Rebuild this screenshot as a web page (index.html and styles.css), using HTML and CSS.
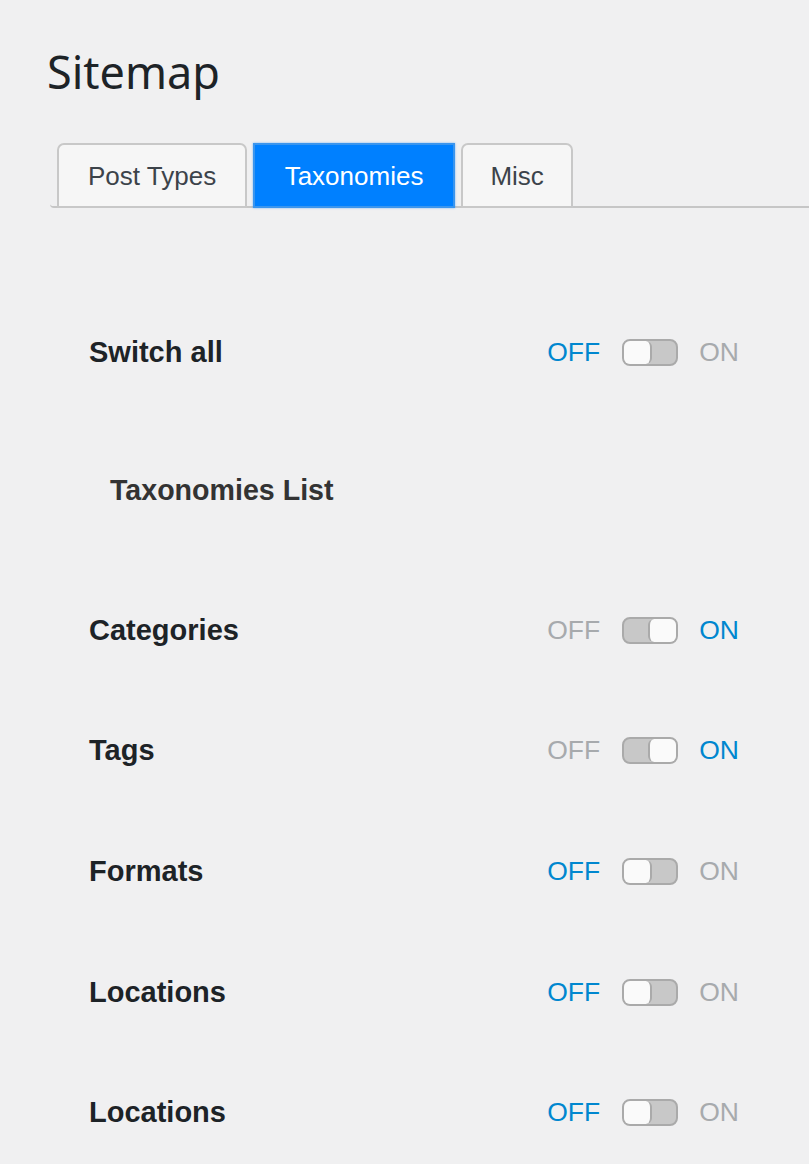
FILE: index.html
```html
<!DOCTYPE html>
<html>
<head>
<meta charset="utf-8">
<link rel="stylesheet" href="styles.css">
</head>
<body>
<div class="wrap">
  <h1 class="title">Sitemap</h1>
  <nav class="tabs">
    <a class="tab">Post Types</a>
    <a class="tab active">Taxonomies</a>
    <a class="tab last">Misc</a>
  </nav>
  <div class="content">
    <div class="row first">
      <span class="label">Switch all</span>
      <div class="switch"><span class="off">OFF</span><span class="toggle"><span class="knob"></span></span><span class="on">ON</span></div>
    </div>
    <div class="section"><h2 class="section-title">Taxonomies List</h2></div>
    <div class="row">
      <span class="label">Categories</span>
      <div class="switch checked"><span class="off">OFF</span><span class="toggle"><span class="knob"></span></span><span class="on">ON</span></div>
    </div>
    <div class="row">
      <span class="label">Tags</span>
      <div class="switch checked"><span class="off">OFF</span><span class="toggle"><span class="knob"></span></span><span class="on">ON</span></div>
    </div>
    <div class="row">
      <span class="label">Formats</span>
      <div class="switch"><span class="off">OFF</span><span class="toggle"><span class="knob"></span></span><span class="on">ON</span></div>
    </div>
    <div class="row">
      <span class="label">Locations</span>
      <div class="switch"><span class="off">OFF</span><span class="toggle"><span class="knob"></span></span><span class="on">ON</span></div>
    </div>
    <div class="row">
      <span class="label">Locations</span>
      <div class="switch"><span class="off">OFF</span><span class="toggle"><span class="knob"></span></span><span class="on">ON</span></div>
    </div>
  </div>
</div>
</body>
</html>
```
FILE: styles.css
```css
html, body {
  margin: 0;
  padding: 0;
  background: #f0f0f1;
  height: 1164px;
  overflow: hidden;
}
.wrap {
  padding-left: 50px;
  font-family: "Liberation Sans", Arial, sans-serif;
}
.title {
  margin: 0 0 0 -3px;
  padding-top: 41px;
  font-family: "Noto Sans", sans-serif;
  font-weight: 400;
  font-size: 45px;
  line-height: 62px;
  color: #1d2327;
}
.tabs {
  display: flex;
  gap: 6px;
  margin-top: 40px;
  padding-left: 7px;
  border-bottom: 2px solid #c6c6c6;
  border-bottom-left-radius: 4px;
}
.tab {
  display: block;
  box-sizing: border-box;
  height: 65px;
  margin-bottom: -2px;
  padding: 0 29px;
  border: 2px solid #c8c8c8;
  border-radius: 7px 7px 0 0;
  background: #f6f6f6;
  color: #3c434a;
  font-size: 26px;
  line-height: 62px;
}
.tab.last {
  padding: 0 27.5px;
}
.tab.active {
  background: #0080ff;
  border: 2px solid #3a95ee;
  border-radius: 0;
  color: #ffffff;
  padding: 0 29.5px;
  box-shadow: 0 0 2px rgba(0, 128, 255, 0.5);
}
.content {
  padding: 84px 70px 0 39px;
}
.row {
  display: flex;
  align-items: center;
  justify-content: space-between;
  height: 120.6px;
}
.row.first {
  height: 120px;
}
.label {
  font-weight: 700;
  font-size: 29px;
  color: #1d2327;
}
.section {
  height: 158px;
  display: flex;
  align-items: center;
}
.section-title {
  margin: 0 0 2px 21px;
  font-weight: 700;
  font-size: 28.6px;
  color: #333333;
}
.switch {
  display: flex;
  align-items: center;
  font-size: 26.5px;
  color: #a7aaad;
}
.switch .off {
  color: #0087cf;
}
.switch .on {
  color: #a7aaad;
}
.switch.checked .off {
  color: #a7aaad;
}
.switch.checked .on {
  color: #0087cf;
}
.toggle {
  display: flex;
  box-sizing: border-box;
  width: 56px;
  height: 27px;
  margin: 0 21px 0 22px;
  border: 2px solid #aaaaaa;
  border-radius: 8px;
  background: #c8c8c8;
}
.knob {
  display: block;
  box-sizing: border-box;
  width: 28px;
  height: 100%;
  background: #fafafa;
  border-right: 2px solid #aaaaaa;
  border-radius: 6px;
}
.switch.checked .toggle {
  justify-content: flex-end;
}
.switch.checked .knob {
  border-right: 0;
  border-left: 2px solid #aaaaaa;
}
```
